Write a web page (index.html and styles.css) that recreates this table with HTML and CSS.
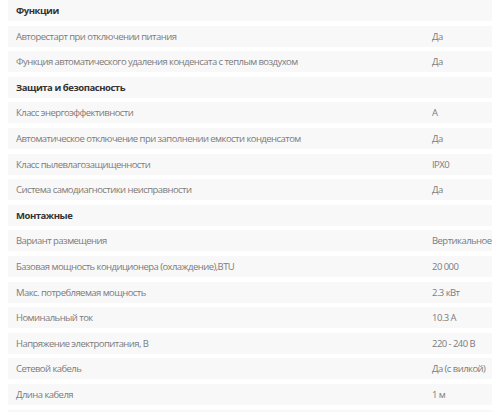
FILE: index.html
```html
<!DOCTYPE html>
<html lang="ru">
<head>
<meta charset="utf-8">
<link rel="stylesheet" href="styles.css">
</head>
<body>
<div class="specs">
  <div class="row head"><span class="name">Функции</span></div>
  <div class="row"><span class="name">Авторестарт при отключении питания</span><span class="val">Да</span></div>
  <div class="row"><span class="name">Функция автоматического удаления конденсата с теплым воздухом</span><span class="val">Да</span></div>
  <div class="row head"><span class="name">Защита и безопасность</span></div>
  <div class="row"><span class="name">Класс энергоэффективности</span><span class="val">A</span></div>
  <div class="row"><span class="name">Автоматическое отключение при заполнении емкости конденсатом</span><span class="val">Да</span></div>
  <div class="row"><span class="name">Класс пылевлагозащищенности</span><span class="val">IPX0</span></div>
  <div class="row"><span class="name">Система самодиагностики неисправности</span><span class="val">Да</span></div>
  <div class="row head"><span class="name">Монтажные</span></div>
  <div class="row"><span class="name">Вариант размещения</span><span class="val">Вертикальное</span></div>
  <div class="row"><span class="name">Базовая мощность кондиционера (охлаждение),BTU</span><span class="val">20 000</span></div>
  <div class="row"><span class="name">Макс. потребляемая мощность</span><span class="val">2.3 кВт</span></div>
  <div class="row"><span class="name">Номинальный ток</span><span class="val">10.3 A</span></div>
  <div class="row"><span class="name">Напряжение электропитания, В</span><span class="val">220 - 240 В</span></div>
  <div class="row"><span class="name">Сетевой кабель</span><span class="val">Да (с вилкой)</span></div>
  <div class="row"><span class="name">Длина кабеля</span><span class="val">1 м</span></div>
  <div class="row"><span class="name"></span></div>
</div>
</body>
</html>
```
FILE: styles.css
```css
html, body {
  margin: 0;
  padding: 0;
  background: #ffffff;
}
body {
  font-family: "Open Sans", "DejaVu Sans", sans-serif;
  font-size: 9.5px;
  letter-spacing: -0.55px;
  color: #7c7c7c;
}
.specs {
  display: flex;
  flex-direction: column;
  gap: 4.6px;
  padding: 0 8px;
}
.row {
  display: flex;
  align-items: center;
  height: 21px;
  background: #f8f8f8;
  padding: 0 8px;
  flex-shrink: 0;
  white-space: nowrap;
}
.name {
  width: 416px;
  flex-shrink: 0;
}
.val {
  flex: 1;
}
.head .name {
  font-weight: 700;
  color: #333333;
  letter-spacing: -0.45px;
}
```
